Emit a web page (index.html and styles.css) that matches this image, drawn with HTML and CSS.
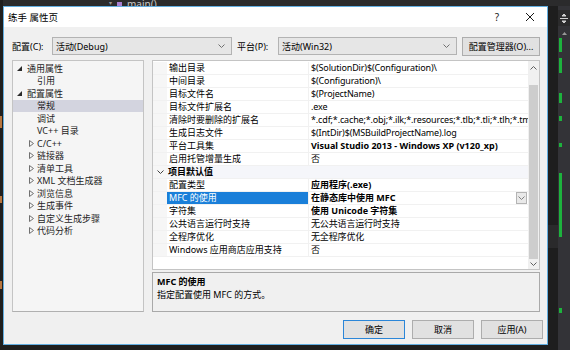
FILE: index.html
```html
<!DOCTYPE html>
<html lang="zh-CN">
<head>
  <meta charset="UTF-8">
  <title>练手 属性页</title>
  <link rel="stylesheet" href="styles.css">
</head>
<body>
  <div class="desk">
    <div class="edge-left">
      <i class="ed-mark m1"></i>
      <i class="ed-mark m2"></i>
      <i class="ed-mark m3"></i>
    </div>
    <div class="middle">
      <div class="editor-top">
        <span class="nav-arrow">▾</span>
        <span class="fn-icon"></span>
        <span class="fn-name">main()</span>
      </div>
      <div class="dialog">
        <div class="titlebar">
          <span class="title">练手 属性页</span>
          <span class="tb-btn help">?</span>
          <span class="tb-btn close">
            <svg width="10" height="10" viewBox="0 0 10 10"><path d="M1 1L9 9M9 1L1 9" stroke="#1a1a1a" stroke-width="1"/></svg>
          </span>
        </div>
        <div class="dlg-body">
          <div class="config-row">
            <label class="cfg-label">配置(C):</label>
            <div class="select sel-config">
              <span>活动(Debug)</span>
              <svg class="chev" width="7" height="4" viewBox="0 0 7 4"><path d="M0.5 0.5L3.5 3.5L6.5 0.5" stroke="#707070" fill="none"/></svg>
            </div>
            <label class="cfg-label plat">平台(P):</label>
            <div class="select sel-platform">
              <span>活动(Win32)</span>
              <svg class="chev" width="7" height="4" viewBox="0 0 7 4"><path d="M0.5 0.5L3.5 3.5L6.5 0.5" stroke="#707070" fill="none"/></svg>
            </div>
            <button class="btn cfg-mgr">配置管理器(O)...</button>
          </div>

          <div class="main">
            <div class="tree">
              <div class="node lvl0">
                <svg class="tw" width="5" height="5" viewBox="0 0 5 5"><path d="M5 0L5 5L0 5Z" fill="#2a2a2a"/></svg>
                <span>通用属性</span>
              </div>
              <div class="node lvl1"><span>引用</span></div>
              <div class="node lvl0">
                <svg class="tw" width="5" height="5" viewBox="0 0 5 5"><path d="M5 0L5 5L0 5Z" fill="#2a2a2a"/></svg>
                <span>配置属性</span>
              </div>
              <div class="node lvl1 selected"><span>常规</span></div>
              <div class="node lvl1"><span>调试</span></div>
              <div class="node lvl1"><span>VC++ 目录</span></div>
              <div class="node lvl1c">
                <svg class="tw" width="5" height="7" viewBox="0 0 5 7"><path d="M0.5 0.5L4.5 3.5L0.5 6.5Z" fill="none" stroke="#707070"/></svg>
                <span>C/C++</span>
              </div>
              <div class="node lvl1c">
                <svg class="tw" width="5" height="7" viewBox="0 0 5 7"><path d="M0.5 0.5L4.5 3.5L0.5 6.5Z" fill="none" stroke="#707070"/></svg>
                <span>链接器</span>
              </div>
              <div class="node lvl1c">
                <svg class="tw" width="5" height="7" viewBox="0 0 5 7"><path d="M0.5 0.5L4.5 3.5L0.5 6.5Z" fill="none" stroke="#707070"/></svg>
                <span>清单工具</span>
              </div>
              <div class="node lvl1c">
                <svg class="tw" width="5" height="7" viewBox="0 0 5 7"><path d="M0.5 0.5L4.5 3.5L0.5 6.5Z" fill="none" stroke="#707070"/></svg>
                <span>XML 文档生成器</span>
              </div>
              <div class="node lvl1c">
                <svg class="tw" width="5" height="7" viewBox="0 0 5 7"><path d="M0.5 0.5L4.5 3.5L0.5 6.5Z" fill="none" stroke="#707070"/></svg>
                <span>浏览信息</span>
              </div>
              <div class="node lvl1c">
                <svg class="tw" width="5" height="7" viewBox="0 0 5 7"><path d="M0.5 0.5L4.5 3.5L0.5 6.5Z" fill="none" stroke="#707070"/></svg>
                <span>生成事件</span>
              </div>
              <div class="node lvl1c">
                <svg class="tw" width="5" height="7" viewBox="0 0 5 7"><path d="M0.5 0.5L4.5 3.5L0.5 6.5Z" fill="none" stroke="#707070"/></svg>
                <span>自定义生成步骤</span>
              </div>
              <div class="node lvl1c">
                <svg class="tw" width="5" height="7" viewBox="0 0 5 7"><path d="M0.5 0.5L4.5 3.5L0.5 6.5Z" fill="none" stroke="#707070"/></svg>
                <span>代码分析</span>
              </div>
            </div>

            <div class="right">
              <div class="grid">
                <div class="rows">
                  <div class="row"><div class="gutter"></div><div class="name">输出目录</div><div class="value">$(SolutionDir)$(Configuration)\</div></div>
                  <div class="row"><div class="gutter"></div><div class="name">中间目录</div><div class="value">$(Configuration)\</div></div>
                  <div class="row"><div class="gutter"></div><div class="name">目标文件名</div><div class="value">$(ProjectName)</div></div>
                  <div class="row"><div class="gutter"></div><div class="name">目标文件扩展名</div><div class="value">.exe</div></div>
                  <div class="row"><div class="gutter"></div><div class="name">清除时要删除的扩展名</div><div class="value">*.cdf;*.cache;*.obj;*.ilk;*.resources;*.tlb;*.tli;*.tlh;*.tmp;*.rsp;*.pgc;*.pgd</div></div>
                  <div class="row"><div class="gutter"></div><div class="name">生成日志文件</div><div class="value">$(IntDir)$(MSBuildProjectName).log</div></div>
                  <div class="row"><div class="gutter"></div><div class="name">平台工具集</div><div class="value bold">Visual Studio 2013 - Windows XP (v120_xp)</div></div>
                  <div class="row"><div class="gutter"></div><div class="name">启用托管增量生成</div><div class="value">否</div></div>
                  <div class="row category">
                    <div class="gutter">
                      <svg width="7" height="4" viewBox="0 0 7 4"><path d="M0.5 0.5L3.5 3.5L6.5 0.5" stroke="#404040" fill="none"/></svg>
                    </div>
                    <div class="cat-name">项目默认值</div>
                  </div>
                  <div class="row"><div class="gutter"></div><div class="name">配置类型</div><div class="value bold">应用程序(.exe)</div></div>
                  <div class="row active"><div class="gutter"></div><div class="name">MFC 的使用</div>
                    <div class="value bold">
                      <span class="val-text">在静态库中使用 MFC</span>
                      <span class="drop-btn">
                        <svg width="7" height="4" viewBox="0 0 7 4"><path d="M0.5 0.5L3.5 3.5L6.5 0.5" stroke="#808080" fill="none"/></svg>
                      </span>
                    </div>
                  </div>
                  <div class="row"><div class="gutter"></div><div class="name">字符集</div><div class="value bold">使用 Unicode 字符集</div></div>
                  <div class="row"><div class="gutter"></div><div class="name">公共语言运行时支持</div><div class="value">无公共语言运行时支持</div></div>
                  <div class="row"><div class="gutter"></div><div class="name">全程序优化</div><div class="value">无全程序优化</div></div>
                  <div class="row"><div class="gutter"></div><div class="name">Windows 应用商店应用支持</div><div class="value">否</div></div>
                </div>
                <div class="vscroll">
                  <div class="sb-arrow">
                    <svg width="7" height="4" viewBox="0 0 7 4"><path d="M0.5 3.5L3.5 0.5L6.5 3.5" stroke="#606060" fill="none"/></svg>
                  </div>
                  <div class="sb-track"><div class="sb-thumb"></div></div>
                  <div class="sb-arrow down">
                    <svg width="7" height="4" viewBox="0 0 7 4"><path d="M0.5 0.5L3.5 3.5L6.5 0.5" stroke="#606060" fill="none"/></svg>
                  </div>
                </div>
              </div>
              <div class="desc">
                <div class="desc-title">MFC 的使用</div>
                <div class="desc-text">指定配置使用 MFC 的方式。</div>
              </div>
            </div>
          </div>

          <div class="buttons">
            <button class="btn action default">确定</button>
            <button class="btn action">取消</button>
            <button class="btn action">应用(A)</button>
          </div>
        </div>
      </div>
    </div>
    <div class="edge-right">
      <div class="ed-gap"><div class="ed-block"></div></div>
      <div class="ed-scroll">
        <div class="ed-split">
          <svg width="8" height="9" viewBox="0 0 8 9"><path d="M4 0L6 2H2Z M4 9L6 7H2Z M0 4.5H8" stroke="#d0d0d0" fill="#d0d0d0" stroke-width="1"/></svg>
        </div>
        <div class="ed-up">
          <svg width="5" height="3" viewBox="0 0 5 3"><path d="M0 3L2.5 0L5 3Z" fill="#999"/></svg>
        </div>
        <i class="hit h1"></i>
        <i class="hit h2"></i>
        <i class="hit h3"></i>
        <i class="hit h4"></i>
        <i class="hit h5"></i>
        <i class="hit h6"></i>
        <i class="hit h7"></i>
      </div>
    </div>
  </div>
</body>
</html>
```

FILE: styles.css
```css
body {
  margin: 0;
  background-color: #1e1e1e;
  font-family: "Noto Sans", "Noto Sans CJK SC", sans-serif;
  font-size: 9px;
  color: #000000;
}
.desk {
  display: flex;
  width: 570px;
  height: 350px;
  overflow: hidden;
}

/* editor behind the dialog */
.edge-left {
  position: relative;
  width: 3px;
  flex: none;
  background-color: #1e1e1e;
}
.ed-mark {
  position: absolute;
  left: 0;
  width: 2px;
  background-color: #b8763e;
}
.m1 { top: 116px; height: 12px; }
.m2 { top: 196px; height: 7px; }
.m3 { top: 281px; height: 8px; }

.middle {
  width: 545px;
  flex: none;
  display: flex;
  flex-direction: column;
}
.editor-top {
  height: 6px;
  background-color: #2b2b2c;
  display: flex;
  align-items: flex-end;
  overflow: hidden;
  color: #c8c8c8;
  padding-left: 106px;
  gap: 5px;
}
.nav-arrow {
  font-size: 6px;
  line-height: 6px;
  color: #999999;
}
.fn-icon {
  width: 5px;
  height: 4px;
  background-color: #a77fd0;
}
.fn-name {
  font-size: 10px;
  line-height: 8px;
  height: 6px;
  overflow: hidden;
}

.dialog {
  height: 339px;
  box-sizing: border-box;
  border: 1px solid #63aee0;
  background-color: #f0f0f0;
  display: flex;
  flex-direction: column;
}
.titlebar {
  height: 20px;
  background-color: #ffffff;
  display: flex;
  align-items: center;
  padding-left: 4px;
}
.title {
  flex: 1;
  font-size: 9.5px;
}
.tb-btn {
  width: 32px;
  text-align: center;
  font-size: 10px;
  color: #1a1a1a;
}
.tb-btn.close {
  width: 34px;
  display: flex;
  justify-content: center;
}
.dlg-body {
  flex: 1;
  min-width: 0;
  padding: 0 4px 5px 8px;
  display: flex;
  flex-direction: column;
}

.config-row {
  display: flex;
  align-items: center;
  height: 18px;
  margin-top: 10px;
  margin-right: 3px;
}
.cfg-label {
  width: 40px;
  flex: none;
}
.cfg-label.plat {
  width: 41px;
  margin-left: 5px;
}
.select {
  height: 18px;
  flex: none;
  box-sizing: border-box;
  border: 1px solid #b3b3b3;
  background-color: #e6e6e6;
  display: flex;
  align-items: center;
  justify-content: space-between;
  padding: 0 6px 0 3px;
}
.sel-config { width: 180px; }
.sel-platform { width: 179px; }
.btn {
  font-family: inherit;
  font-size: 9px;
  color: #000000;
  background-color: #e1e1e1;
  border: 1px solid #adadad;
  padding: 0;
  box-sizing: border-box;
}
.cfg-mgr {
  width: 78px;
  height: 19px;
  flex: none;
  margin-left: 5px;
}

.main {
  display: flex;
  gap: 8px;
  height: 252px;
  margin-top: 5px;
  margin-right: 3px;
}
.tree {
  width: 132px;
  flex: none;
  box-sizing: border-box;
  border: 1px solid #c4c4c4;
  border-bottom-color: #b0b0b0;
  background-color: #f5f5f5;
  padding-top: 1px;
}
.node {
  height: 12.5px;
  display: flex;
  align-items: center;
  color: #1e1e1e;
  white-space: nowrap;
}
.node .tw {
  flex: none;
}
.lvl0 { padding-left: 4px; }
.lvl0 span { margin-left: 5px; }
.lvl1 { padding-left: 24px; }
.lvl1c { padding-left: 16px; }
.lvl1c span { margin-left: 3px; }
.node.selected {
  background-color: #d3d4df;
}

.right {
  flex: 1;
  min-width: 0;
  display: flex;
  flex-direction: column;
  gap: 2px;
}
.grid {
  height: 210px;
  box-sizing: border-box;
  border: 1px solid #c4c4c4;
  background-color: #ffffff;
  display: flex;
}
.rows {
  flex: 1;
  min-width: 0;
  padding-top: 1px;
  overflow: hidden;
}
.row {
  height: 13px;
  display: flex;
  box-sizing: border-box;
  border-bottom: 1px solid #f1f1f1;
}
.gutter {
  width: 14px;
  flex: none;
  background-color: #f6f6f6;
  display: flex;
  align-items: center;
  justify-content: center;
}
.name {
  width: 139px;
  flex: none;
  padding-left: 2px;
  line-height: 12px;
  white-space: nowrap;
  overflow: hidden;
}
.value {
  flex: 1;
  min-width: 0;
  padding-left: 2px;
  border-left: 1px solid #f1f1f1;
  line-height: 12px;
  white-space: nowrap;
  overflow: hidden;
  display: flex;
  align-items: center;
  letter-spacing: -0.15px;
}
.bold {
  font-weight: bold;
  letter-spacing: 0;
}
.category {
  background-color: #f5f6fa;
}
.cat-name {
  font-weight: bold;
  padding-left: 1px;
  line-height: 12px;
}
.row.active .name {
  background-color: #1a7fd9;
  color: #ffffff;
}
.val-text {
  flex: 1;
}
.drop-btn {
  width: 11px;
  height: 12px;
  flex: none;
  box-sizing: border-box;
  border: 1px solid #b4b4b4;
  background-color: #e9e9e9;
  display: flex;
  align-items: center;
  justify-content: center;
  margin-right: 1px;
}
.vscroll {
  width: 11px;
  flex: none;
  background-color: #f0f0f0;
  display: flex;
  flex-direction: column;
}
.sb-arrow {
  height: 13px;
  display: flex;
  align-items: center;
  justify-content: center;
}
.sb-arrow.down {
  height: 10px;
}
.sb-track {
  flex: 1;
  padding-top: 11px;
  display: flex;
}
.sb-thumb {
  flex: 1;
  margin: 0 1px;
  background-color: #cdcdcd;
}

.desc {
  height: 40px;
  box-sizing: border-box;
  border: 1px solid #a9a9a9;
  background-color: #f0f0f0;
  padding: 2px 4px;
}
.desc-title {
  font-weight: bold;
  line-height: 13px;
}
.desc-text {
  line-height: 13px;
}

.buttons {
  display: flex;
  justify-content: flex-end;
  gap: 7px;
  margin-top: 8px;
}
.action {
  width: 62px;
  height: 19px;
}
.action.default {
  border-color: #2b86d8;
}

.edge-right {
  width: 22px;
  flex: none;
  display: flex;
  padding-top: 6px;
  background-color: #2b2b2c;
}
.ed-gap {
  width: 10px;
  background-color: #1e1e1e;
  position: relative;
}
.ed-block {
  position: absolute;
  top: 219px;
  left: 0;
  width: 10px;
  height: 23px;
  background-color: #2a2a2b;
}
.ed-scroll {
  flex: 1;
  position: relative;
  background-color: #333337;
}
.ed-split {
  height: 16px;
  display: flex;
  align-items: center;
  justify-content: center;
  margin-top: 4px;
  background-color: #2b2b2c;
}
.ed-up {
  display: flex;
  justify-content: center;
  margin-top: 6px;
}
.hit {
  position: absolute;
  left: 1px;
  width: 3px;
  background-color: #1db33d;
}
.h1 { top: 32px; height: 14px; }
.h2 { top: 52px; height: 15px; }
.h3 { top: 87px; height: 10px; }
.h4 { top: 110px; height: 5px; }
.h5 { top: 137px; height: 4px; }
.h6 { top: 167px; height: 64px; }
.h7 { top: 302px; height: 5px; }
```
